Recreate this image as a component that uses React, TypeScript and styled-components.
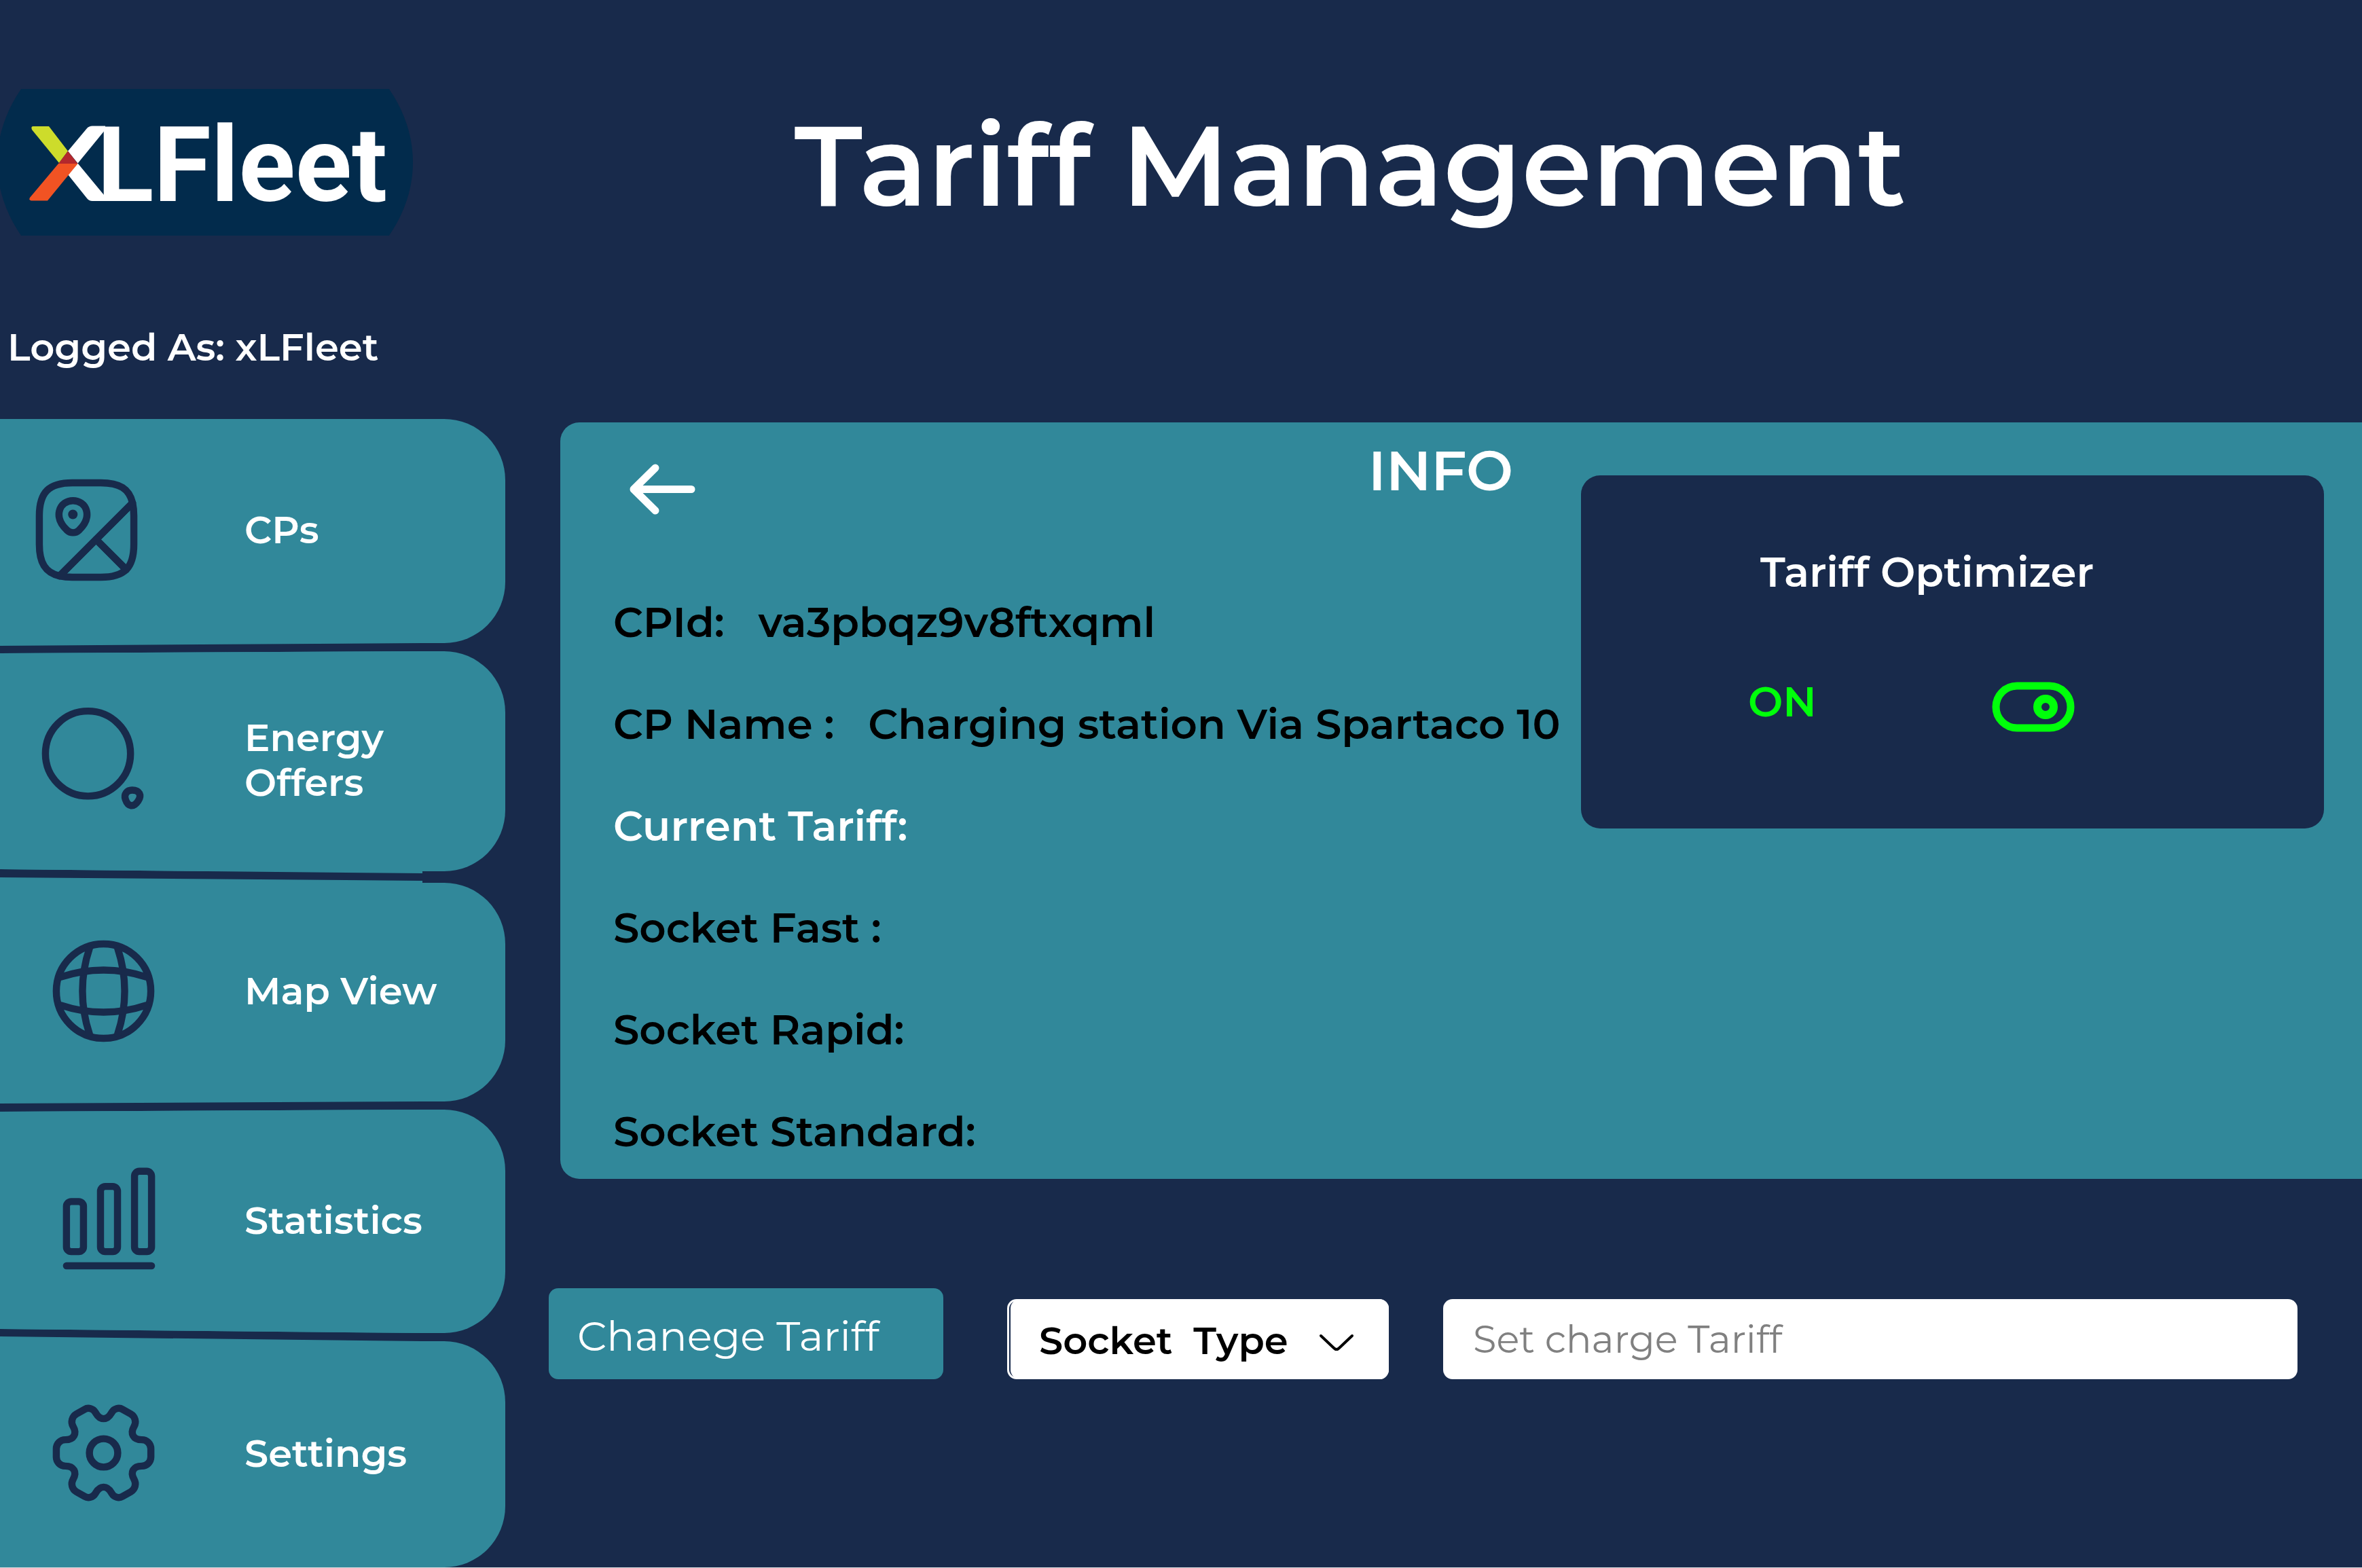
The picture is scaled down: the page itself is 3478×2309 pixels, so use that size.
import React from 'react';
import styled, { createGlobalStyle } from 'styled-components';

const navy = '#182a4b';
const teal = '#31889a';
const green = '#00ff0a';

const GlobalStyle = createGlobalStyle`
  * { box-sizing: border-box; }
  body { margin: 0; background: #d5dade; }
  body, button, input, select {
    font-family: Montserrat, Inter, "Liberation Sans", sans-serif;
    font-weight: 600;
  }
  h1, h2, h3, p, ul, dl, dd { margin: 0; padding: 0; font-weight: inherit; }
`;

const Page = styled.div`
  display: grid;
  grid-template-columns: 744px minmax(0, 1fr);
  background: ${navy};
  color: #fff;
  overflow: hidden;
`;

const Sidebar = styled.aside`
  display: flex;
  flex-direction: column;
  padding-top: 131px;
`;

const Logo = styled.svg`
  display: block;
  width: 610px;
  height: 216px;
`;

const LogoText = styled.text`
  font-family: Roboto, "Noto Sans", sans-serif;
  font-size: 154px;
  font-weight: 700;
  fill: #fff;
`;

const LoggedAs = styled.p`
  margin: 124px 0 66px;
  padding-left: 11px;
  font-size: 56px;
  line-height: 80px;
`;

const NavList = styled.ul`
  display: flex;
  flex-direction: column;
  gap: 12px;
  list-style: none;
`;

const NavItem = styled.li<{ $spaced?: boolean }>`
  margin-top: ${(p) => (p.$spaced ? 5 : 0)}px;
`;

/* slant: vertical offsets of the left part of the tile, as
   [top at far left, top at the step, bottom at the step, bottom at far left] */
const NavLink = styled.a<{ $slant: number[]; $height: number }>`
  position: relative;
  display: grid;
  grid-template-columns: 360px 1fr;
  align-items: center;
  height: ${(p) => p.$height}px;
  padding-bottom: 4px;
  border-radius: 0 90px 90px 0;
  background: ${teal};
  color: #fff;
  font-size: 56px;
  line-height: 66px;
  text-decoration: none;
  clip-path: polygon(
    0 ${(p) => p.$slant[0]}px,
    622px ${(p) => p.$slant[1]}px,
    622px 0,
    100% 0,
    100% 100%,
    622px 100%,
    622px calc(100% + ${(p) => p.$slant[2]}px),
    0 calc(100% + ${(p) => p.$slant[3]}px)
  );

  &::before {
    content: '';
    position: absolute;
    inset: -10px 122px -10px 0;
    background: ${teal};
  }
`;

const NavIcon = styled.svg<{ $indent: number }>`
  position: relative;
  width: 167px;
  height: 167px;
  margin-left: ${(p) => p.$indent}px;
  fill: none;
  stroke: ${navy};
  stroke-width: 1.5;
  stroke-linecap: round;
  stroke-linejoin: round;
`;

const NavLabel = styled.span`
  position: relative;
  max-width: 300px;
`;

const Main = styled.main`
  display: flex;
  flex-direction: column;
`;

const Title = styled.h1`
  padding: 144px 246px 278px 0;
  font-size: 166px;
  line-height: 200px;
  text-align: center;
`;

const InfoPanel = styled.section`
  display: flex;
  align-items: flex-start;
  margin-left: 81px;
  padding: 23px 56px 34px 78px;
  border-radius: 28px 0 0 28px;
  background: ${teal};
`;

const InfoBody = styled.div`
  flex: 1;
  min-width: 0;
`;

const InfoHeader = styled.div`
  display: flex;
  align-items: flex-start;
  justify-content: space-between;
  padding: 0 100px 0 24px;
`;

const BackButton = styled.button`
  margin-top: 38px;
  padding: 0;
  border: 0;
  background: none;
  cursor: pointer;
`;

const BackIcon = styled.svg`
  display: block;
  width: 98px;
  height: 75px;
  fill: none;
  stroke: #fff;
  stroke-width: 11;
  stroke-linecap: round;
  stroke-linejoin: round;
`;

const InfoTitle = styled.h2`
  font-size: 82px;
  line-height: 96px;
`;

const Details = styled.dl`
  display: flex;
  flex-direction: column;
  gap: 78px;
  margin-top: 122px;
`;

const DetailRow = styled.div<{ $light?: boolean }>`
  display: flex;
  gap: 50px;
  color: ${(p) => (p.$light ? '#fff' : '#000')};
  font-size: 61px;
  line-height: 72px;
  white-space: nowrap;
`;

const OptimizerCard = styled.section`
  width: 1094px;
  height: 520px;
  margin-top: 55px;
  padding: 106px 250px 0 246px;
  border-radius: 28px;
  background: ${navy};
`;

const OptimizerTitle = styled.h3`
  padding-left: 18px;
  font-size: 61px;
  line-height: 72px;
`;

const OptimizerState = styled.div`
  display: flex;
  align-items: flex-start;
  gap: 258px;
  margin-top: 118px;
  color: ${green};
  font-size: 61px;
  line-height: 74px;
`;

const Switch = styled.label`
  position: relative;
  display: flex;
  padding-top: 8px;
  cursor: pointer;
`;

const SwitchInput = styled.input`
  position: absolute;
  inset: 0;
  margin: 0;
  opacity: 0;
`;

const SwitchIcon = styled.svg`
  width: 122px;
  height: 74px;
  fill: none;
  stroke: ${green};
`;

const TariffForm = styled.form`
  display: flex;
  align-items: flex-end;
  margin-top: 161px;
  padding: 0 95px 0 64px;
`;

const ChangeButton = styled.button`
  width: 581px;
  height: 134px;
  margin-right: 94px;
  padding: 6px 0 0 42px;
  border: 0;
  border-radius: 14px;
  background: ${teal};
  color: #fff;
  font-size: 61px;
  font-weight: 400;
  text-align: left;
`;

const SelectFrame = styled.div`
  position: relative;
  width: 562px;
  height: 118px;
  margin-right: 80px;
  border: 3px solid #fff;
  border-radius: 14px;
`;

const SocketSelect = styled.select`
  display: block;
  width: 557px;
  height: 118px;
  margin: -3px -3px -3px 2px;
  padding: 4px 0 0 42px;
  border: 0;
  border-radius: 14px;
  appearance: none;
  background: #fff;
  color: #000;
  font-size: 56px;
`;

const Chevron = styled.svg`
  position: absolute;
  top: 48px;
  right: 48px;
  width: 52px;
  height: 28px;
  fill: none;
  stroke: #000;
  stroke-width: 4;
  stroke-linecap: round;
  stroke-linejoin: round;
  pointer-events: none;
`;

const TariffInput = styled.input`
  flex: 1;
  min-width: 0;
  height: 118px;
  padding: 0 44px;
  border: 0;
  border-radius: 14px;
  background: #fff;
  color: #000;
  font-size: 56px;
  font-weight: 400;

  &::placeholder {
    color: #808080;
    opacity: 1;
  }
`;

const icons = {
  map: (
    <>
      <path d="M22 9v6c0 2.5-.5 4.25-1.62 5.38L14 14l7.73-7.73C21.91 7.06 22 7.96 22 9Z" />
      <path d="M21.73 6.27 6.27 21.73C3.26 21.04 2 18.96 2 15V9c0-5 2-7 7-7h6c3.96 0 6.04 1.26 6.73 4.27Z" />
      <path d="M20.38 20.38C19.25 21.5 17.5 22 15 22H9c-1.04 0-1.94-.09-2.73-.27L14 14l6.38 6.38Z" />
      <path d="M6.24 7.98c.68-2.93 5.08-2.93 5.76 0 .39 1.72-.69 3.18-1.64 4.08-.69.66-1.78.66-2.48 0-.95-.9-2.04-2.36-1.64-4.08Z" />
      <path d="M9.09 8.7h.01" strokeWidth="2" />
    </>
  ),
  search: (
    <g transform="translate(0 -.4)">
      <circle cx="11" cy="11" r="9" />
      <path d="M18.93 20.69c.53 1.6 1.74 1.76 2.67.36.85-1.28.29-2.33-1.25-2.33-1.14-.01-1.78.88-1.42 1.97Z" />
    </g>
  ),
  globe: (
    <>
      <circle cx="12" cy="12" r="10" />
      <path d="M9 3c-1.95 5.84-1.95 12.16 0 18M15 3c1.95 5.84 1.95 12.16 0 18" />
      <path d="M3 15c5.84 1.95 12.16 1.95 18 0M3 9c5.84-1.95 12.16-1.95 18 0" />
    </>
  ),
  chart: (
    <g transform="translate(0 -.3)">
      <rect x="3" y="8.4" width="3.6" height="10.6" rx="1" />
      <rect x="10.2" y="5.2" width="3.6" height="13.8" rx="1" />
      <rect x="17.4" y="2" width="3.6" height="17" rx="1" />
      <path d="M3 22h18" />
    </g>
  ),
  gear: (
    <>
      <circle cx="12" cy="12" r="3" />
      <path d="M2 12.88v-1.76c0-1.04.85-1.9 1.9-1.9 1.81 0 2.55-1.28 1.64-2.85-.52-.9-.21-2.07.7-2.59l1.73-.99c.79-.47 1.81-.19 2.28.6l.11.19c.9 1.57 2.38 1.57 3.29 0l.11-.19c.47-.79 1.49-1.07 2.28-.6l1.73.99c.91.52 1.22 1.69.7 2.59-.91 1.57-.17 2.85 1.64 2.85 1.04 0 1.9.85 1.9 1.9v1.76c0 1.04-.85 1.9-1.9 1.9-1.81 0-2.55 1.28-1.64 2.85.52.91.21 2.07-.7 2.59l-1.73.99c-.79.47-1.81.19-2.28-.6l-.11-.19c-.9-1.57-2.38-1.57-3.29 0l-.11.19c-.47.79-1.49 1.07-2.28.6l-1.73-.99c-.91-.52-1.22-1.69-.7-2.59.91-1.57.17-2.85-1.64-2.85-1.05 0-1.9-.86-1.9-1.9Z" />
    </>
  ),
};

const navItems = [
  { label: 'CPs', icon: icons.map, indent: 44, height: 330, slant: [0, 0, 0, 4] },
  { label: 'Energy Offers', icon: icons.search, indent: 53, height: 324, slant: [3, 0, 3, -3] },
  { label: 'Map View', icon: icons.globe, indent: 69, height: 322, slant: [-8, -3, 0, 3], spaced: true },
  { label: 'Statistics', icon: icons.chart, indent: 77, height: 329, slant: [3, 0, 0, -6] },
  { label: 'Settings', icon: icons.gear, indent: 69, height: 333, slant: [-7, 0, 0, 0] },
];

const details = [
  { label: 'CPId:', value: 'va3pbqz9v8ftxqml' },
  { label: 'CP Name :', value: 'Charging station Via Spartaco 10' },
  { label: 'Current Tariff:', value: '', light: true },
  { label: 'Socket Fast :', value: '' },
  { label: 'Socket Rapid:', value: '' },
  { label: 'Socket Standard:', value: '' },
];

export default function App() {
  return (
    <>
      <GlobalStyle />
      <Page>
        <Sidebar>
          <Logo viewBox="0 131 610 216" role="img" aria-label="XLFleet">
            <clipPath id="badge">
              <ellipse cx="302" cy="239" rx="306" ry="232" />
            </clipPath>
            <rect x="0" y="131" width="610" height="216" fill="#022b4c" clipPath="url(#badge)" />
            <path d="M100 222.500 128 189Q131 185.500 136 185.500H155V191L114.500 240.500Z" fill="#fff" />
            <path d="M114.500 240.500 153 287V296H136Q131 296 128 292L100 257Z" fill="#fff" />
            <path d="M49 186H72L100 222.500 87 240 47 191Q45 186 49 186Z" fill="#cddc2b" />
            <path d="M86 241H114.500L70 295.500H46Q42 295 44 291Z" fill="#f15323" />
            <path d="M100 222.500 114.500 241H86Z" fill="#b3282d" />
            <LogoText x="143" y="296">LFleet</LogoText>
          </Logo>
          <LoggedAs>Logged As: xLFleet</LoggedAs>
          <nav>
            <NavList>
              {navItems.map((item) => (
                <NavItem key={item.label} $spaced={item.spaced}>
                  <NavLink href="#" $slant={item.slant} $height={item.height}>
                    <NavIcon viewBox="0 0 24 24" $indent={item.indent} aria-hidden="true">
                      {item.icon}
                    </NavIcon>
                    <NavLabel>{item.label}</NavLabel>
                  </NavLink>
                </NavItem>
              ))}
            </NavList>
          </nav>
        </Sidebar>

        <Main>
          <Title>Tariff Management</Title>

          <InfoPanel>
            <InfoBody>
              <InfoHeader>
                <BackButton type="button" aria-label="Back">
                  <BackIcon viewBox="0 0 98 75">
                    <path d="M38 6 6 37.500 38 69M6 37.500H91" />
                  </BackIcon>
                </BackButton>
                <InfoTitle>INFO</InfoTitle>
              </InfoHeader>
              <Details>
                {details.map((row) => (
                  <DetailRow key={row.label} $light={row.light}>
                    <dt>{row.label}</dt>
                    <dd>{row.value}</dd>
                  </DetailRow>
                ))}
              </Details>
            </InfoBody>

            <OptimizerCard>
              <OptimizerTitle>Tariff Optimizer</OptimizerTitle>
              <OptimizerState>
                <span>ON</span>
                <Switch>
                  <SwitchInput type="checkbox" role="switch" defaultChecked aria-label="Tariff Optimizer" />
                  <SwitchIcon viewBox="0 0 122 74" aria-hidden="true">
                    <rect x="6" y="6" width="110" height="62" rx="31" strokeWidth="11" />
                    <circle cx="79" cy="37" r="12" strokeWidth="12" />
                  </SwitchIcon>
                </Switch>
              </OptimizerState>
            </OptimizerCard>
          </InfoPanel>

          <TariffForm>
            <ChangeButton type="button">Chanege Tariff</ChangeButton>
            <SelectFrame>
              <SocketSelect aria-label="Socket Type">
                <option>Socket&nbsp; Type</option>
              </SocketSelect>
              <Chevron viewBox="0 0 52 28" aria-hidden="true">
                <path d="M3 3 22 21Q26 25 30 21L49 3" />
              </Chevron>
            </SelectFrame>
            <TariffInput type="text" placeholder="Set charge Tariff" aria-label="Set charge Tariff" />
          </TariffForm>
        </Main>
      </Page>
    </>
  );
}
